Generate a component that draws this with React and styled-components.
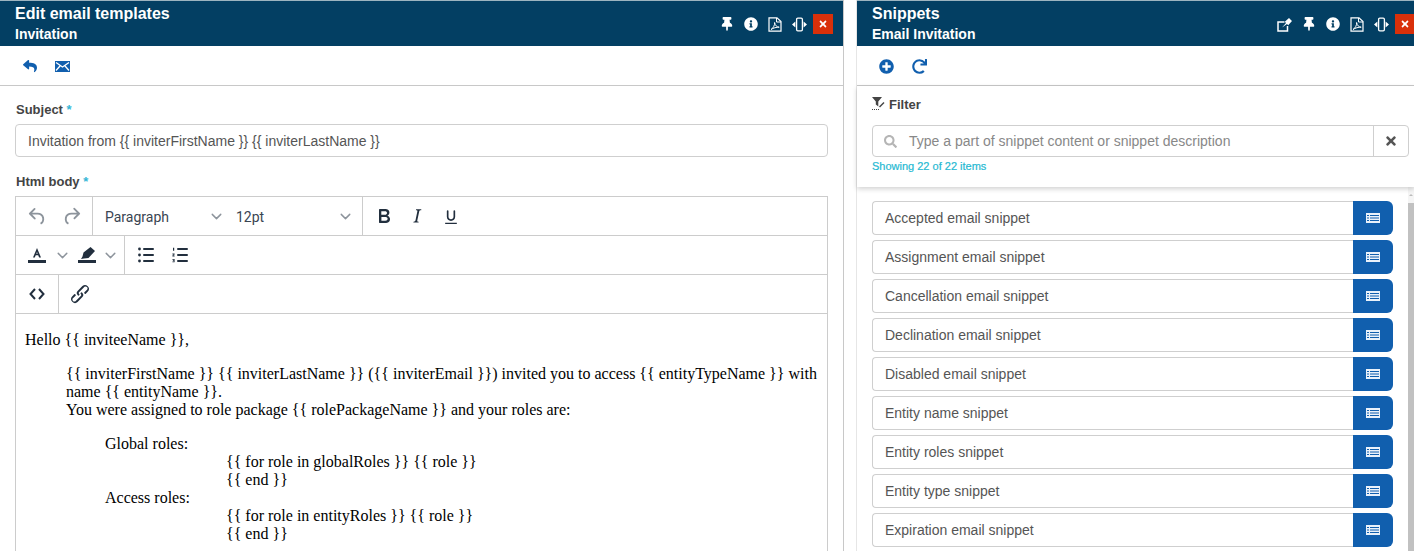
import React from 'react';
import styled, { createGlobalStyle } from 'styled-components';
import { FaThumbtack, FaInfoCircle, FaPlusCircle, FaRedo, FaReply, FaSearch, FaTimes } from 'react-icons/fa';
import { ChevronDown } from 'lucide-react';

const Global = createGlobalStyle`
  html, body { margin: 0; padding: 0; background: #fff; overflow: hidden; }
  * { box-sizing: border-box; }
  body { font-family: "Liberation Sans", Arial, sans-serif; color: #444; }
`;

const Page = styled.div`
  display: flex;
  width: 1414px;
  height: 551px;
  overflow: hidden;
  gap: 12px;
`;
const Panel = styled.section`
  display: flex;
  flex-direction: column;
  flex: ${p => (p.$main ? '0 0 844px' : '1 1 0')};
  min-width: 0;
  height: 551px;
  border-right: ${p => (p.$main ? '1px solid #c8c8c8' : 'none')};
  border-left: ${p => (p.$main ? 'none' : '1px solid #e6e6e6')};
`;
const Header = styled.header`
  flex: 0 0 46px;
  display: flex;
  align-items: flex-start;
  justify-content: space-between;
  background: #033f63;
  border-top: 1px solid #9db4c0;
  color: #fff;
  padding: ${p => (p.$main ? '0 10px 0 15px' : '0 0 0 15px')};
`;
const Titles = styled.div`
  display: flex;
  flex-direction: column;
  padding-top: 4px;
`;
const Title = styled.div`
  font-size: 16px;
  font-weight: 700;
  line-height: 18px;
`;
const Subtitle = styled.div`
  font-size: 14px;
  font-weight: 700;
  line-height: 16px;
  margin-top: 3px;
`;
const HeaderTools = styled.div`
  display: flex;
  align-items: center;
  gap: 9px;
  height: 20px;
  margin: ${p => (p.$side ? '13px -1px 0 0' : '13px 0 0 0')};
  color: #fff;
`;
const HeaderIcon = styled.span`
  display: flex;
  align-items: center;
  justify-content: center;
  flex: 0 0 ${p => p.$w}px;
  height: 16px;
  svg { display: block; flex: none; }
`;
const CloseBtn = styled.button`
  display: flex;
  align-items: center;
  justify-content: center;
  width: 20px;
  height: 20px;
  margin-left: -3px;
  padding: 0;
  border: 0;
  background: #d9300a;
  color: #fff;
  font-size: 10px;
`;
const Actions = styled.div`
  flex: 0 0 40px;
  display: flex;
  align-items: center;
  gap: 18px;
  padding: 1px 0 0 ${p => (p.$side ? 22 : 23)}px;
  border-bottom: 1px solid #c8c8c8;
  color: #115fae;
  svg { display: block; }
`;
const Body = styled.div`
  flex: 1;
  min-height: 0;
  display: flex;
  flex-direction: column;
  padding: 0 15px;
  overflow: hidden;
`;
const Label = styled.label`
  font-size: 13px;
  font-weight: 700;
  line-height: 16px;
  color: #444;
  padding-left: 1px;
  margin: ${p => (p.$first ? '16px 0 6px' : '17px 0 6px')};
  span { color: #35b6d6; font-weight: 700; }
`;
const TextInput = styled.div`
  height: 33px;
  flex: 0 0 33px;
  display: flex;
  align-items: center;
  padding-left: 12px;
  border: 1px solid #cfcfcf;
  border-radius: 4px;
  font-size: 14px;
  color: #555;
`;
const Editor = styled.div`
  flex: 1;
  display: flex;
  flex-direction: column;
  border: 1px solid #ccc;
  border-bottom: 0;
  min-height: 0;
  margin-bottom: -40px;
`;
const ToolRow = styled.div`
  flex: 0 0 39px;
  display: flex;
  align-items: stretch;
  border-bottom: 1px solid #ccc;
`;
const ToolGroup = styled.div`
  display: flex;
  align-items: center;
  padding: ${p => p.$pad || '0 9px'};
  gap: ${p => p.$gap || '0'};
  border-right: 1px solid #ccc;
  &:last-child { border-right: 0; }
  color: #222f3e;
  svg { display: block; flex: none; }
`;
const ToolBtn = styled.span`
  display: flex;
  align-items: center;
  justify-content: center;
  width: ${p => p.$w || 34}px;
  height: 24px;
  color: ${p => (p.$muted ? '#8d949c' : '#222f3e')};
`;
const Select = styled.div`
  display: flex;
  align-items: center;
  justify-content: space-between;
  width: ${p => p.$w}px;
  padding-right: ${p => p.$pr || 0}px;
  font-family: Roboto, sans-serif;
  font-size: 14px;
  color: #3a4552;
`;
const SelectText = styled.span`
  padding-top: 2px;
`;
const Caret = styled(ChevronDown)`
  color: #8d949c;
`;
const Content = styled.div`
  flex: 1;
  padding: 17px 10px 0 9px;
  font-family: "Liberation Serif", serif;
  font-size: 16px;
  line-height: 18px;
  color: #000;
  p { margin: 0 0 16px; }
`;
const Quote = styled.div`
  margin: 0 0 16px ${p => p.$in || 41}px;
`;
const Line = styled.div`
  padding-left: ${p => p.$in || 0}px;
`;

const FilterBox = styled.div`
  flex: 0 0 101px;
  padding: 0 5px 0 15px;
  box-shadow: 0 2px 5px rgba(0,0,0,.18);
  position: relative;
  z-index: 1;
`;
const FilterLabel = styled.div`
  display: flex;
  align-items: center;
  gap: 4px;
  height: 18px;
  margin-top: 9px;
  font-size: 13px;
  font-weight: 700;
  color: #444;
`;
const SearchRow = styled.div`
  display: flex;
  height: 32px;
  margin-top: 12px;
  border: 1px solid #cfcfcf;
  border-radius: 4px;
`;
const SearchField = styled.div`
  flex: 1;
  display: flex;
  align-items: center;
  gap: 12px;
  padding-left: 11px;
  font-size: 14px;
  color: #888;
  svg { color: #b5b5b5; }
`;
const SearchClear = styled.div`
  flex: 0 0 35px;
  display: flex;
  align-items: center;
  justify-content: center;
  border-left: 1px solid #cfcfcf;
  color: #555;
  font-size: 14px;
`;
const Count = styled.div`
  margin-top: 2px;
  font-size: 11px;
  line-height: 14px;
  color: #25b9d2;
  -webkit-text-stroke: .2px #25b9d2;
`;
const ListArea = styled.div`
  flex: 1;
  min-height: 0;
  display: flex;
  overflow: hidden;
`;
const List = styled.div`
  flex: 1;
  display: flex;
  flex-direction: column;
  gap: 5px;
  padding: 14px 15px 0 15px;
`;
const Row = styled.div`
  display: flex;
  flex: 0 0 34px;
  height: 34px;
`;
const RowText = styled.div`
  flex: 1;
  display: flex;
  align-items: center;
  padding-left: 12px;
  border: 1px solid #cfcfcf;
  border-right: 0;
  border-radius: 4px 0 0 4px;
  font-size: 14px;
  color: #555;
`;
const RowBtn = styled.button`
  flex: 0 0 40px;
  display: flex;
  align-items: center;
  justify-content: center;
  padding: 0;
  border: 0;
  border-radius: 0 6px 6px 0;
  background: #115fae;
`;
const Track = styled.div`
  flex: 0 0 6px;
  display: flex;
  flex-direction: column;
  background: #f5f5f5;
`;
const TrackArrow = styled.div`
  flex: 0 0 16px;
  display: flex;
  align-items: center;
  justify-content: center;
  &::before {
    content: '';
    border: 2px solid transparent;
    border-top: 0;
    border-bottom: 2px solid #bbb;
  }
`;
const Thumb = styled.div`
  flex: 1;
  background: #c1c1c1;
`;

const Envelope = () => (
  <svg width="15" height="11" viewBox="0 0 15 11">
    <rect width="15" height="11" fill="#115fae" />
    <path d="M1 1.500 7.500 6 14 1.500M1 9.500 5 5M14 9.500 10 5" stroke="#fff" strokeWidth="1.300" fill="none" />
  </svg>
);
const PdfIcon = () => (
  <svg width="14" height="15" viewBox="0 0 14 15" fill="none" stroke="#fff">
    <path d="M1 .8h8L13 4.500V14.200H1z" strokeWidth="1.200" />
    <path d="M8.500 1v4H13" strokeWidth="1" />
    <path d="M3 12.500c2-1 4-4.500 3.600-7 .5 3 2.200 4.500 4.600 4.700-2.500-.2-6 .8-8.200 2.300z" strokeWidth="1" />
  </svg>
);
const PopoutIcon = () => (
  <svg width="16" height="15" viewBox="0 0 16 15">
    <path d="M7.500 5H1v9h9.500V9" fill="none" stroke="#fff" strokeWidth="1.500" />
    <path d="M5 10.500 9 6 7.800 4.800 12 1l3 3-3.800 4.200L10 7z" fill="#fff" />
  </svg>
);
const ResizeIcon = () => (
  <svg width="15" height="15" viewBox="0 0 15 15" fill="#fff">
    <rect x="4.600" y="1.200" width="5.800" height="12.600" rx="1.200" fill="none" stroke="#fff" strokeWidth="1.300" />
    <path d="M0 7.500 3.400 4.400v6.200zM15 7.500l-3.400-3.100v6.200z" />
  </svg>
);
const ListIcon = () => (
  <svg width="14" height="10" viewBox="0 0 14 10">
    <rect width="14" height="10" fill="#e9f1fa" />
    <path d="M1 2.500h12M1 5h12M1 7.500h12" stroke="#115fae" strokeWidth="1" />
    <path d="M3.500 2v6" stroke="#e9f1fa" strokeWidth="1" />
  </svg>
);
const FilterIcon = () => (
  <svg width="13" height="14" viewBox="0 0 13 14">
    <path d="M0 0h10L6.300 4.500V9.500L3.800 7.600V4.500z" fill="#444" />
    <path d="M7 9.500 11.500 5l1 1L8 10.500z" fill="#444" />
    <path d="M0 12.500h7" stroke="#444" strokeDasharray="1 1" />
  </svg>
);
const Icon24 = ({ d, size = 24 }) => (
  <svg width={size} height={size} viewBox="0 0 24 24" fill="currentColor"><path d={d} /></svg>
);
const UNDO = 'M6.4 8H12c3.7 0 6.2 2 6.8 5.1.6 2.7-.4 5.6-2.3 6.8a1 1 0 0 1-1-1.8c1.1-.6 1.8-2.7 1.4-4.6-.5-2.1-2.1-3.5-4.9-3.5H6.4l3.3 3.3a1 1 0 1 1-1.4 1.4l-5-5a1 1 0 0 1 0-1.4l5-5a1 1 0 0 1 1.4 1.4L6.4 8z';
const REDO = 'M17.6 10H12c-2.8 0-4.4 1.4-4.9 3.5-.4 2 .3 4 1.4 4.6a1 1 0 1 1-1 1.8c-1.9-1.2-2.9-4.1-2.3-6.8C5.8 10 8.3 8 12 8h5.6l-3.3-3.3a1 1 0 1 1 1.4-1.4l5 5a1 1 0 0 1 0 1.4l-5 5a1 1 0 0 1-1.4-1.4l3.3-3.3z';
const BOLD = 'M7.8 19c-.3 0-.5 0-.6-.2l-.2-.5V5.7c0-.2 0-.4.2-.5l.6-.2h5c1.5 0 2.7.3 3.5 1 .7.6 1.1 1.4 1.1 2.5a3 3 0 0 1-.6 1.9c-.4.6-1 1-1.6 1.2.4.1.9.3 1.3.6s.8.7 1 1.2c.4.4.5 1 .5 1.6 0 1.3-.4 2.3-1.3 3-.8.7-2.1 1-3.8 1H7.8zm5-8.3c.6 0 1.2-.1 1.6-.5.4-.3.6-.7.6-1.3 0-1.1-.8-1.7-2.3-1.7H9.3v3.5h3.4zm.5 6c.7 0 1.3-.1 1.7-.4.4-.4.6-.9.6-1.5s-.2-1-.7-1.4c-.4-.3-1-.4-2-.4H9.4v3.8h4z';
const ITALIC = 'M16.7 4.7l-.1.9h-.3c-.6 0-1 0-1.4.3-.3.3-.4.6-.5 1.1l-2.1 9.8v.6c0 .5.4.8 1.4.8h.2l-.2.8H8l.2-.8h.2c1.1 0 1.8-.5 2-1.5l2-9.8.1-.5c0-.6-.4-.8-1.4-.8h-.3l.2-.9h5.8z';
const UNDERLINE = 'M16 5c.6 0 1 .4 1 1v7c0 2.8-2.2 5-5 5s-5-2.2-5-5V6c0-.6.4-1 1-1s1 .4 1 1v7c0 1.7 1.3 3 3 3s3-1.3 3-3V6c0-.6.4-1 1-1zM5 20h14v1.6H5z';
const LINK = 'M6.2 12.3a1 1 0 0 1 1.4 1.4l-2.1 2.1a2 2 0 1 0 2.7 2.7l4.8-4.8a1 1 0 0 0 0-1.4 1 1 0 1 1 1.4-1.3 2.9 2.9 0 0 1 0 4L9.600 20a3.900 3.900 0 0 1-5.500-5.500l2.100-2.200zm11.600-.6a1 1 0 0 1-1.400-1.400l2.100-2.100a2 2 0 1 0-2.700-2.700L11 10.300a1 1 0 0 0 0 1.400A1 1 0 1 1 9.600 13a2.900 2.900 0 0 1 0-4l4.800-4.900a3.900 3.900 0 0 1 5.500 5.500l-2.100 2.100z';

const TextColor = () => (
  <svg width="18" height="18" viewBox="0 0 18 18" fill="currentColor">
    <path d="M9 2 13 11.500h-1.900l-.9-2.200H7.700l-.9 2.200H5zM8.300 7.800h1.400L9 6z" />
    <rect y="14" width="18" height="3" />
  </svg>
);
const Highlight = () => (
  <svg width="18" height="18" viewBox="0 0 18 18" fill="currentColor">
    <path d="M12.500 1 17 5 10.500 12 6 12.500 3 13l1.500-2.500 1-4z" />
    <rect y="14" width="18" height="3" />
  </svg>
);
const BulletList = () => (
  <svg width="16" height="16" viewBox="0 0 16 16" fill="currentColor">
    <circle cx="1.500" cy="2" r="1.400" /><circle cx="1.500" cy="8" r="1.400" /><circle cx="1.500" cy="14" r="1.400" />
    <rect x="5" y="1" width="11" height="2" rx="1" /><rect x="5" y="7" width="11" height="2" rx="1" /><rect x="5" y="13" width="11" height="2" rx="1" />
  </svg>
);
const NumList = () => (
  <svg width="16" height="16" viewBox="0 0 16 16" fill="currentColor">
    <path d="M1 .8h1.200v3H1zM.4 6.500h2.200v1L1.300 8.500h1.300v.9H.4v-.9l1.300-1H.4zM.4 12h2.200v3.200H.4v-.8h1.300v-.5H.9v-.7h.8v-.4H.4z" />
    <rect x="5" y="1" width="11" height="2" rx="1" /><rect x="5" y="7" width="11" height="2" rx="1" /><rect x="5" y="13" width="11" height="2" rx="1" />
  </svg>
);
const Code = () => (
  <svg width="16" height="12" viewBox="0 0 16 12" fill="none" stroke="currentColor" strokeWidth="2">
    <path d="M6 1 1.500 6 6 11M10 1l4.500 5L10 11" />
  </svg>
);

const snippets = ['Accepted email snippet', 'Assignment email snippet', 'Cancellation email snippet', 'Declination email snippet', 'Disabled email snippet', 'Entity name snippet', 'Entity roles snippet', 'Entity type snippet', 'Expiration email snippet'];

const SUBJECT = 'Invitation from {{ inviterFirstName }} {{ inviterLastName }}';
const GREETING = 'Hello {{ inviteeName }},';
const INVITED = '{{ inviterFirstName }} {{ inviterLastName }} ({{ inviterEmail }}) invited you to access {{ entityTypeName }} with name {{ entityName }}.';
const ASSIGNED = 'You were assigned to role package {{ rolePackageName }} and your roles are:';
const GLOBAL_LOOP = '{{ for role in globalRoles }} {{ role }}';
const ENTITY_LOOP = '{{ for role in entityRoles }} {{ role }}';
const END = '{{ end }}';

const PanelTools = () => (
  <>
    <HeaderIcon $w={13}><FaThumbtack size={14} /></HeaderIcon>
    <HeaderIcon $w={15}><FaInfoCircle size={14} /></HeaderIcon>
    <HeaderIcon $w={16}><PdfIcon /></HeaderIcon>
    <HeaderIcon $w={15}><ResizeIcon /></HeaderIcon>
    <CloseBtn><FaTimes /></CloseBtn>
  </>
);

export default function App() {
  return (
    <Page>
      <Global />
      <Panel $main>
        <Header $main>
          <Titles>
            <Title>Edit email templates</Title>
            <Subtitle>Invitation</Subtitle>
          </Titles>
          <HeaderTools><PanelTools /></HeaderTools>
        </Header>
        <Actions>
          <FaReply size={14} />
          <Envelope />
        </Actions>
        <Body>
          <Label $first>Subject <span>*</span></Label>
          <TextInput>{SUBJECT}</TextInput>
          <Label>Html body <span>*</span></Label>
          <Editor>
            <ToolRow>
              <ToolGroup $pad="0 4px 0 4px">
                <ToolBtn $muted><Icon24 d={UNDO} size={23} /></ToolBtn>
                <ToolBtn $muted><Icon24 d={REDO} size={23} /></ToolBtn>
              </ToolGroup>
              <ToolGroup $pad="0 8px 0 12px">
                <Select $w={131} $pr={11}><SelectText>Paragraph</SelectText><Caret size={17} /></Select>
                <Select $w={118}><SelectText>12pt</SelectText><Caret size={17} /></Select>
              </ToolGroup>
              <ToolGroup $pad="0 4px 0 4px">
                <ToolBtn $w={33}><Icon24 d={BOLD} /></ToolBtn>
                <ToolBtn $w={34}><Icon24 d={ITALIC} size={22} /></ToolBtn>
                <ToolBtn $w={34}><Icon24 d={UNDERLINE} size={20} /></ToolBtn>
              </ToolGroup>
            </ToolRow>
            <ToolRow>
              <ToolGroup $pad="0 0 0 12px">
                <TextColor />
                <ToolBtn $w={32}><Caret size={17} /></ToolBtn>
                <Highlight />
                <ToolBtn $w={28}><Caret size={17} /></ToolBtn>
              </ToolGroup>
              <ToolGroup $pad="0 0 0 13px" $gap="18px">
                <BulletList />
                <NumList />
              </ToolGroup>
            </ToolRow>
            <ToolRow>
              <ToolGroup $pad="0 13px">
                <Code />
              </ToolGroup>
              <ToolGroup $pad="0 0 0 9px">
                <Icon24 d={LINK} size={24} />
              </ToolGroup>
            </ToolRow>
            <Content>
              <p>{GREETING}</p>
              <Quote>
                <Line>{INVITED}</Line>
                <Line>{ASSIGNED}</Line>
              </Quote>
              <Quote $in={80}>
                <Line>Global roles:</Line>
                <Line $in={121}>{GLOBAL_LOOP}</Line>
                <Line $in={121}>{END}</Line>
                <Line>Access roles:</Line>
                <Line $in={121}>{ENTITY_LOOP}</Line>
                <Line $in={121}>{END}</Line>
              </Quote>
            </Content>
          </Editor>
        </Body>
      </Panel>
      <Panel>
        <Header>
          <Titles>
            <Title>Snippets</Title>
            <Subtitle>Email Invitation</Subtitle>
          </Titles>
          <HeaderTools $side>
            <HeaderIcon $w={16}><PopoutIcon /></HeaderIcon>
            <PanelTools />
          </HeaderTools>
        </Header>
        <Actions $side>
          <FaPlusCircle size={15} />
          <FaRedo size={15} />
        </Actions>
        <FilterBox>
          <FilterLabel><FilterIcon /> Filter</FilterLabel>
          <SearchRow>
            <SearchField><FaSearch size={13} />Type a part of snippet content or snippet description</SearchField>
            <SearchClear><FaTimes /></SearchClear>
          </SearchRow>
          <Count>Showing 22 of 22 items</Count>
        </FilterBox>
        <ListArea>
          <List>
            {snippets.map(s => (
              <Row key={s}>
                <RowText>{s}</RowText>
                <RowBtn><ListIcon /></RowBtn>
              </Row>
            ))}
          </List>
          <Track><TrackArrow /><Thumb /></Track>
        </ListArea>
      </Panel>
    </Page>
  );
}
